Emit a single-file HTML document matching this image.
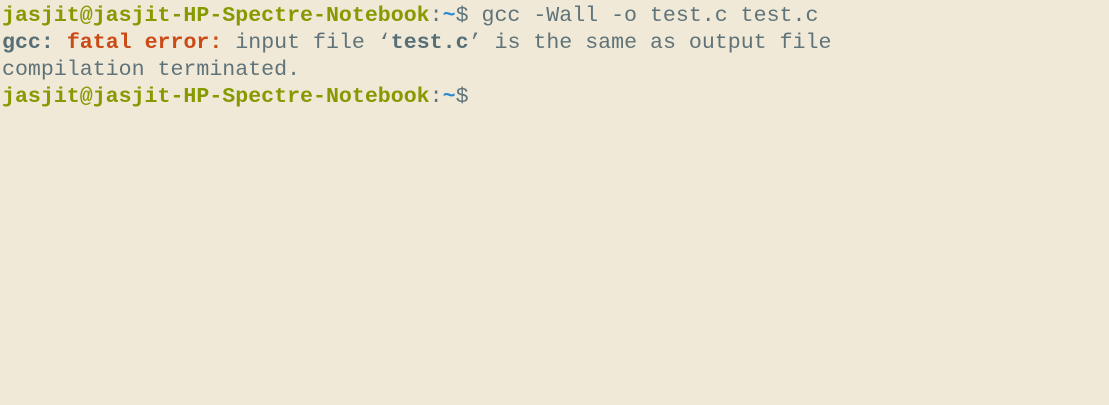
<!DOCTYPE html>
<html><head><style>
html,body{margin:0;padding:0;width:1109px;height:405px;background:#f0e9d8;overflow:hidden}
pre{margin:0;padding:3px 0 0 2px;font-family:"Liberation Mono",monospace;font-size:21.6px;line-height:27px;color:#5f7379;white-space:pre}
.g{color:#869a00;font-weight:bold}
.b{color:#268bd2;font-weight:bold}
.r{color:#cb4b16;font-weight:bold}
.w{font-weight:bold;color:#566e75}
</style></head><body>
<pre><span class="g">jasjit@jasjit-HP-Spectre-Notebook</span>:<span class="b">~</span>$ gcc -Wall -o test.c test.c
<span class="w">gcc:</span> <span class="r">fatal error:</span> input file ‘<span class="w">test.c</span>’ is the same as output file
compilation terminated.
<span class="g">jasjit@jasjit-HP-Spectre-Notebook</span>:<span class="b">~</span>$ </pre>
</body></html>
